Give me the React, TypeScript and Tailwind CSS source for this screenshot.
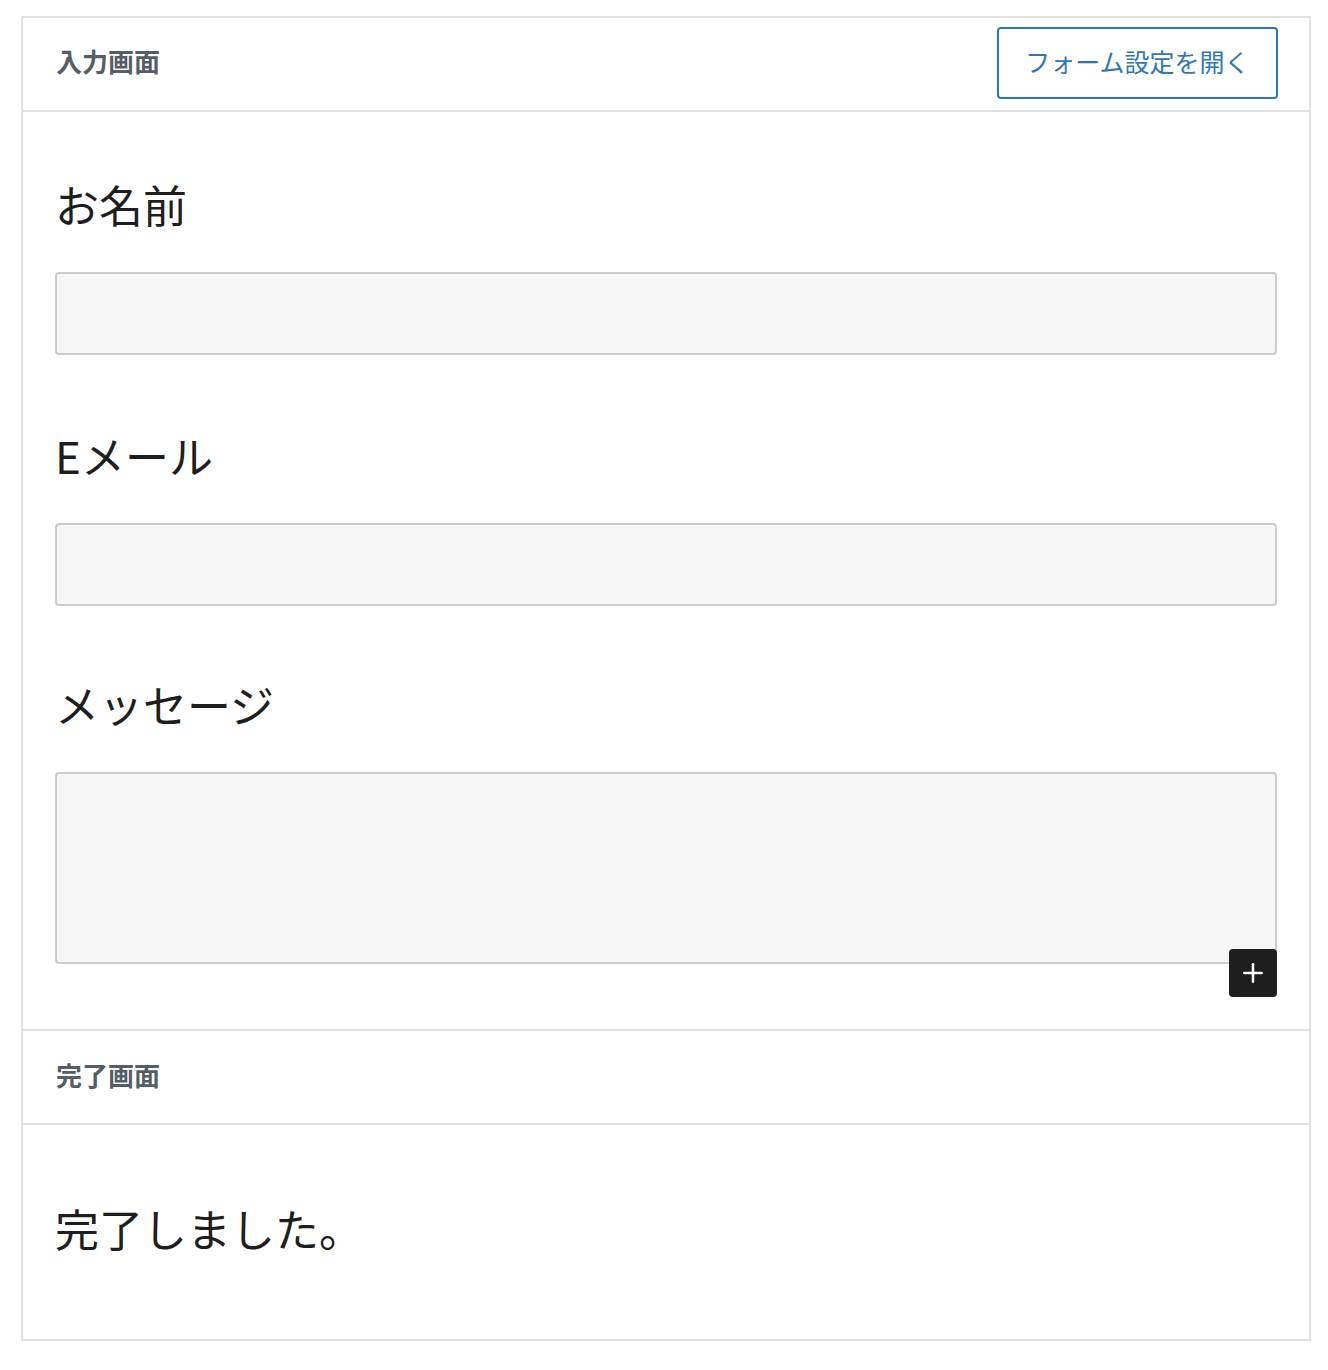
import { Plus } from "lucide-react";

const fields = [
  { id: "name", label: "お名前", multiline: false, gap: "" },
  { id: "email", label: "Eメール", multiline: false, gap: "mt-[67px]" },
  { id: "message", label: "メッセージ", multiline: true, gap: "mt-[65px]" },
];

const font = "font-['Noto_Sans_CJK_JP','Noto_Sans',sans-serif]";

export default function App() {
  return (
    <div className={`min-h-[1370px] bg-white pt-4 ${font}`}>
      <div className="ml-[21px] w-[1290px] border-2 border-[#e0e0e0]">
        {/* Input screen header */}
        <div className="flex h-[94px] items-start justify-between border-b-2 border-[#e0e0e0] pl-[33px] pr-[31px]">
          <p className="mt-[30px] text-[26px] font-bold leading-none text-[#555d66]">入力画面</p>
          <button className="mt-[9px] flex h-[72px] w-[281px] items-center justify-center rounded-[4px] border-2 border-[#2f76b6] pb-[3px] text-[25px] text-[#2f76b6]">
            フォーム設定を開く
          </button>
        </div>

        {/* Form fields */}
        <div className="flex flex-col border-b-2 border-[#e0e0e0] px-[32px] pt-[59px] pb-[32px]">
          {fields.map((f) => (
            <div key={f.id} className={f.gap}>
              <p className="mb-[35px] text-[44px] leading-[66px] text-[#1e1e1e]">{f.label}</p>
              <div
                className={`w-full rounded-[4px] border-2 border-[#cccccc] bg-[#f6f6f6] ${
                  f.multiline ? "h-[192px]" : "h-[83px]"
                }`}
              />
            </div>
          ))}
          <div className="-mt-[15px] flex justify-end">
            <button className="flex h-[48px] w-[48px] items-center justify-center rounded-[4px] bg-[#1e1e1e] text-white">
              <Plus size={30} strokeWidth={2} />
            </button>
          </div>
        </div>

        {/* Complete screen header */}
        <div className="flex h-[94px] items-center border-b-2 border-[#e0e0e0] pb-[4px] pl-[33px]">
          <p className="text-[26px] font-bold leading-none text-[#555d66]">完了画面</p>
        </div>

        {/* Complete message */}
        <div className="flex h-[214px] items-center px-[32px] pb-[8px]">
          <p className="text-[44px] leading-[66px] text-[#1e1e1e]">完了しました。</p>
        </div>
      </div>
    </div>
  );
}
